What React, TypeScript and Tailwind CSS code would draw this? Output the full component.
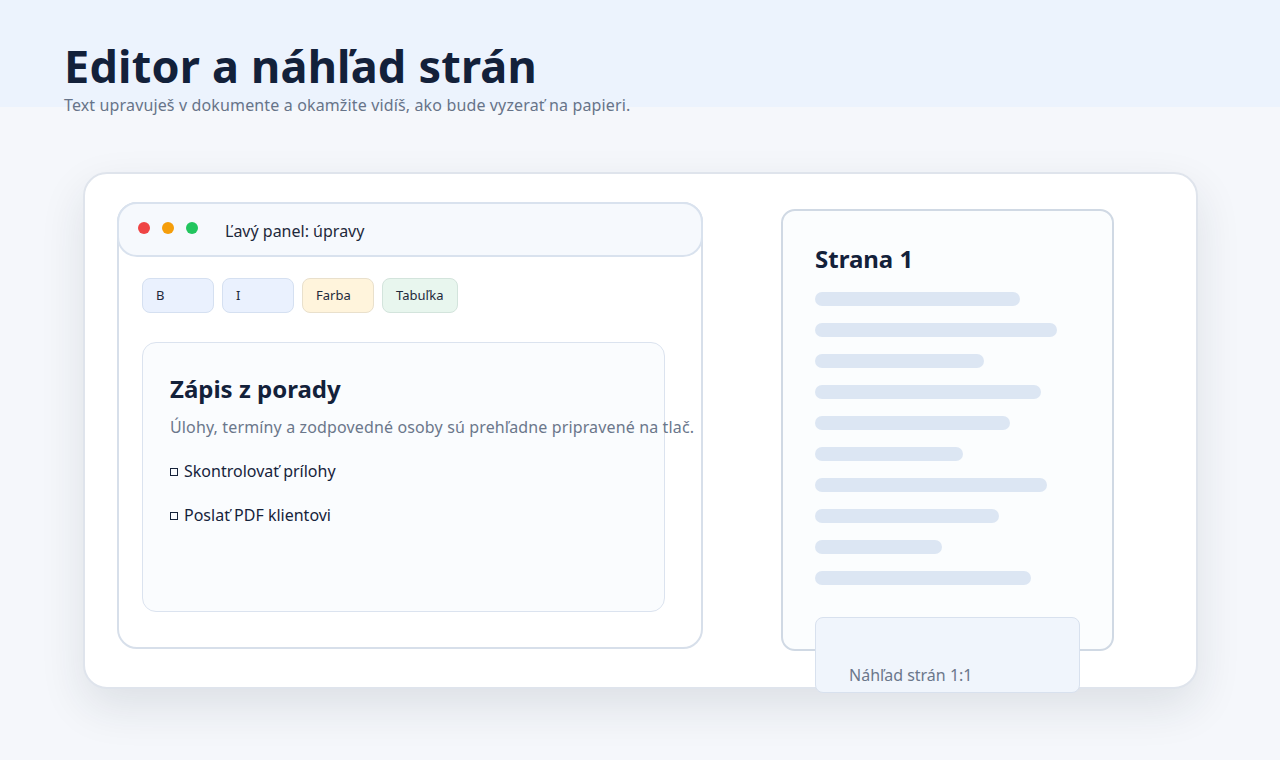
const BARS = [205, 242, 169, 226, 195, 148, 232, 184, 127, 216];

const TOOLS = [
  { label: 'B', cls: 'w-[72px] bg-[#eaf1fe] border-[#d5e0f1]' },
  { label: 'I', cls: 'w-[72px] bg-[#eaf1fe] border-[#d5e0f1]' },
  { label: 'Farba', cls: 'w-[72px] bg-[#fff4dc] border-[#e9e0cc]' },
  { label: 'Tabuľka', cls: 'w-[76px] bg-[#e8f6ee] border-[#d3e4dc]' },
];

const TASKS = ['Skontrolovať prílohy', 'Poslať PDF klientovi'];

export default function App() {
  return (
    <div className="relative min-h-[760px] w-full overflow-hidden bg-[#f5f7fb] font-['Noto_Sans','Open_Sans',sans-serif] text-[#13213a]">
      <div className="absolute inset-x-0 top-0 h-[107px] bg-[#ecf3fd]" />

      <div className="relative px-16 pt-[42px]">
        <h1 className="text-[45px] font-bold leading-[48px] tracking-[0.2px] text-[#13213a]">Editor a náhľad strán</h1>
        <p className="mt-[3px] text-[16px] leading-6 tracking-[0.14px] text-[#677489]">
          Text upravuješ v dokumente a okamžite vidíš, ako bude vyzerať na papieri.
        </p>
      </div>

      <div className="relative ml-[83px] mt-[55px] flex h-[517px] w-[1115px] items-start rounded-[24px] border-2 border-[#dfe4ec] bg-white pl-[32px] pt-[28px] shadow-[0_18px_45px_rgba(30,41,59,0.11)]">
        {/* left panel */}
        <div className="flex h-[447px] w-[586px] flex-col rounded-[20px] border-2 border-[#d7dfea] bg-white">
          <div className="-mx-[2px] -mt-[2px] flex h-[55px] items-center rounded-[20px] border-2 border-[#d9e2ee] bg-[#f6f9fd] pl-[19px]">
            <span className="mb-[4px] h-3 w-3 rounded-full bg-[#ef4444]" />
            <span className="mb-[4px] ml-3 h-3 w-3 rounded-full bg-[#f59e0b]" />
            <span className="mb-[4px] ml-3 h-3 w-3 rounded-full bg-[#22c55e]" />
            <span className="ml-[27px] mt-[3px] text-[16px] text-[#1e293b]">Ľavý panel: úpravy</span>
          </div>

          <div className="ml-[23px] mt-[21px] flex gap-2">
            {TOOLS.map((t) => (
              <div key={t.label} className={`flex h-[35px] items-center rounded-[8px] border pl-[13px] text-[13px] text-[#1e293b] ${t.cls}`}>
                {t.label}
              </div>
            ))}
          </div>

          <div className="ml-[23px] mt-[29px] h-[270px] w-[523px] rounded-[14px] border border-[#dbe3ef] bg-[#fafcfe] pl-[27px] pt-[30px]">
            <div className="text-[24px] font-bold leading-8 text-[#13213a]">Zápis z porady</div>
            <div className="mt-[10px] whitespace-nowrap text-[16px] leading-6 tracking-[0.14px] text-[#6b778b]">
              Úlohy, termíny a zodpovedné osoby sú prehľadne pripravené na tlač.
            </div>
            {TASKS.map((task) => (
              <div key={task} className="mt-[20px] flex items-center text-[16px] leading-6 text-[#16233b]">
                <span className="mr-[6px] mt-[2px] h-2 w-2 border border-[#16233b]" />
                {task}
              </div>
            ))}
          </div>
        </div>

        {/* right page */}
        <div className="relative ml-[78px] mt-[7px] h-[442px] w-[333px] rounded-[14px] border-2 border-[#d0d9e4] bg-[#fbfdfe] pl-[32px] pt-[32px]">
          <div className="text-[24px] font-bold leading-8 text-[#13213a]">Strana 1</div>
          <div className="mt-[17px] flex flex-col gap-[17px]">
            {BARS.map((w, i) => (
              <div key={i} className="h-[14px] rounded-full bg-[#dce6f3]" style={{ width: w }} />
            ))}
          </div>
          <div className="absolute left-[32px] top-[406px] flex h-[76px] w-[265px] items-end rounded-[8px] border border-[#d8e1ee] bg-[#f0f5fc] pb-[5px] pl-[33px] text-[16px] text-[#6b778b]">
            Náhľad strán 1:1
          </div>
        </div>
      </div>
    </div>
  );
}
